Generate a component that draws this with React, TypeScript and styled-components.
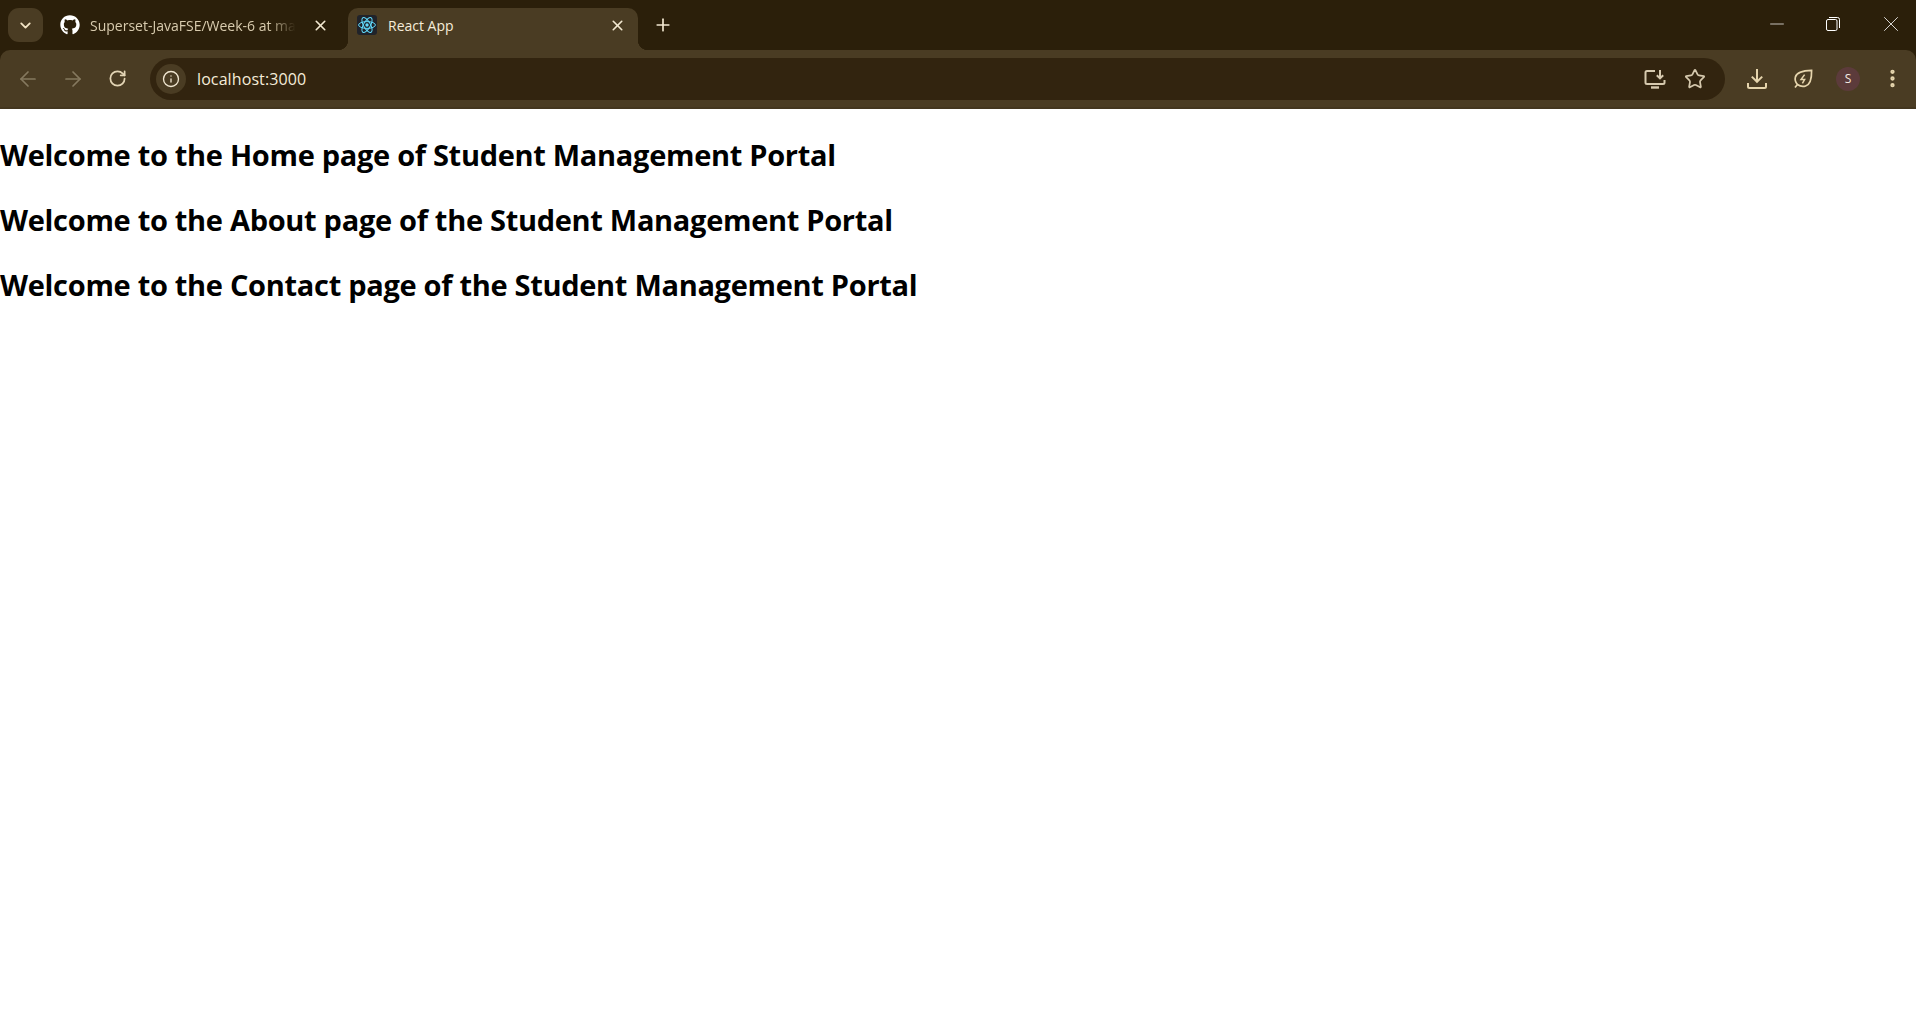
import React from 'react'
import styled, { createGlobalStyle } from 'styled-components'
import { FaGithub } from 'react-icons/fa'
import { ArrowLeft, ArrowRight, ChevronDown, EllipsisVertical, Info, Minus, Plus, RotateCw, Star, X } from 'lucide-react'

const GlobalStyle = createGlobalStyle`
  html, body {
    margin: 0;
    padding: 0;
    background: #ffffff;
  }
  body {
    font-family: "Open Sans", "Noto Sans", "Liberation Sans", sans-serif;
  }
`

const Browser = styled.header`
  background: #2b1f0a;
`

const TabStrip = styled.div`
  display: flex;
  align-items: flex-end;
  height: 50px;
  padding-left: 8px;
`

const TabSearch = styled.button`
  display: flex;
  align-items: center;
  justify-content: center;
  align-self: flex-start;
  width: 35px;
  height: 34px;
  margin-top: 8px;
  padding: 0;
  border: 0;
  border-radius: 11px;
  background: #4a3c23;
  color: #f3e4c4;
`

const Tab = styled.div<{ $active?: boolean }>`
  position: relative;
  display: flex;
  align-items: center;
  width: ${({ $active }) => ($active ? '290px' : '292px')};
  height: 42px;
  margin-left: ${({ $active }) => ($active ? '8px' : '5px')};
  padding: 0 ${({ $active }) => ($active ? '12px' : '11px')} 8px ${({ $active }) => ($active ? '9px' : '12px')};
  box-sizing: border-box;
  border-radius: 10px 10px 0 0;
  background: ${({ $active }) => ($active ? '#4a3c23' : 'transparent')};
  color: ${({ $active }) => ($active ? '#f5ecd9' : '#d8cbae')};
  font-size: 14px;
  ${({ $active }) =>
    $active &&
    `
    &::before, &::after {
      content: '';
      position: absolute;
      bottom: 0;
      width: 10px;
      height: 10px;
    }
    &::before {
      left: -10px;
      background: radial-gradient(circle at 0 0, transparent 10px, #4a3c23 10.5px);
    }
    &::after {
      right: -10px;
      background: radial-gradient(circle at 100% 0, transparent 10px, #4a3c23 10.5px);
    }
  `}
`

const TabIcon = styled.span<{ $gap: number }>`
  display: flex;
  flex: none;
  width: 20px;
  height: 20px;
  margin-right: ${({ $gap }) => $gap}px;
`

const FaviconTile = styled.svg`
  display: block;
  width: 20px;
  height: 20px;
`

const TabTitle = styled.span<{ $fade?: boolean }>`
  flex: 1;
  overflow: hidden;
  white-space: nowrap;
  ${({ $fade }) =>
    $fade &&
    `
    mask-image: linear-gradient(to right, #000 84%, transparent 97%);
  `}
`

const TabClose = styled.span`
  display: flex;
  flex: none;
  margin-left: 10px;
  color: #f3e9d2;
`

const NewTab = styled.span`
  display: flex;
  align-self: center;
  margin-left: 15px;
  color: #f3e9d2;
`

const WindowControls = styled.div`
  display: flex;
  align-self: flex-start;
  margin-left: auto;
  height: 50px;
`

const WindowButton = styled.span<{ $width: number }>`
  display: flex;
  align-items: center;
  justify-content: center;
  width: ${({ $width }) => $width}px;
  padding-bottom: 2px;
  color: #ffffff;
`

const Toolbar = styled.div`
  display: flex;
  align-items: center;
  height: 57px;
  padding: 0 2px 0 10px;
  border-bottom: 2px solid #43361f;
  border-radius: 10px 10px 0 0;
  background: #4a3c23;
`

const NavButton = styled.span<{ $dim?: boolean }>`
  display: flex;
  align-items: center;
  justify-content: center;
  flex: none;
  width: 36px;
  margin-right: 8.5px;
  color: ${({ $dim }) => ($dim ? '#85795f' : '#e3d5b5')};
`

const Omnibox = styled.div`
  display: flex;
  align-items: center;
  flex: 1;
  height: 42px;
  margin-left: 6.5px;
  padding: 0 10px 0 6px;
  border-radius: 21px;
  background: #32240f;
`

const SiteInfo = styled.span`
  display: flex;
  align-items: center;
  justify-content: center;
  flex: none;
  width: 30px;
  height: 30px;
  border-radius: 50%;
  background: #4a3c23;
  color: #f0e6d0;
`

const Address = styled.span`
  flex: 1;
  margin-left: 11px;
  color: #f5ecd9;
  font-size: 16px;
  letter-spacing: 0.1px;
`

const OmniAction = styled.span<{ $gap: number }>`
  display: flex;
  margin-right: ${({ $gap }) => $gap}px;
  color: #d6c9ae;
`

const ToolActions = styled.div`
  display: flex;
  align-items: center;
  margin-left: 9px;
`

const ToolAction = styled.span<{ $width: number }>`
  display: flex;
  align-items: center;
  justify-content: center;
  width: ${({ $width }) => $width}px;
  color: #e6d5ad;
`

const Avatar = styled.span`
  display: flex;
  align-items: center;
  justify-content: center;
  width: 24px;
  height: 24px;
  border-radius: 50%;
  background: #5c3b3b;
  color: #f4e8e0;
  font-size: 12px;
`

const Content = styled.main`
  padding-top: 13px;
  color: #000000;
`

const Heading = styled.h1`
  margin: 0;
  padding: 0;
  height: 65px;
  font-size: 29px;
  line-height: 65px;
  font-weight: 700;
  white-space: nowrap;
  letter-spacing: -0.3px;
`

function ReactFavicon() {
  return (
    <FaviconTile viewBox="0 0 20 20">
      <rect width="20" height="20" rx="3" fill="#20232a" />
      <g fill="none" stroke="#61dafb" strokeWidth="1">
        <ellipse cx="10" cy="10" rx="8.4" ry="3.4" />
        <ellipse cx="10" cy="10" rx="8.4" ry="3.4" transform="rotate(60 10 10)" />
        <ellipse cx="10" cy="10" rx="8.4" ry="3.4" transform="rotate(120 10 10)" />
      </g>
      <circle cx="10" cy="10" r="1.7" fill="#61dafb" />
    </FaviconTile>
  )
}

function InstallIcon() {
  return (
    <svg width="22" height="20" viewBox="0 0 22 20" fill="none" stroke="currentColor" strokeWidth="2">
      <path d="M11 2H3a1.5 1.5 0 0 0-1.5 1.5v10A1.5 1.5 0 0 0 3 15h16a1.5 1.5 0 0 0 1.5-1.5V11" />
      <path d="M7 18.5h8" strokeWidth="2.4" />
      <path d="M16 1v8M12.8 6.2 16 9.4l3.2-3.2" />
    </svg>
  )
}

function DownloadIcon() {
  return (
    <svg width="20" height="20" viewBox="0 0 20 20" fill="none" stroke="currentColor" strokeWidth="2">
      <path d="M10 0v12.5M4.8 7.6l5.2 5.2 5.2-5.2" />
      <path d="M1 14v3.5A1.5 1.5 0 0 0 2.5 19h15a1.5 1.5 0 0 0 1.5-1.5V14" />
    </svg>
  )
}

function LeafBoltIcon() {
  return (
    <svg width="20" height="20" viewBox="0 0 20 20" fill="none" stroke="currentColor" strokeWidth="1.7">
      <path d="M2 18.5l2.4-3C2.8 13.6 1.6 11 2.4 8 3.6 3.6 8.5 1.6 18.6 1.4c.2 9-1.6 14-6 15.6-2.9 1-5.8.2-8.2-1.5" />
      <path d="M11.6 5.6 8 10.6h3.6L9.4 14.4" strokeWidth="1.5" />
    </svg>
  )
}

function RestoreIcon() {
  return (
    <svg width="14" height="14" viewBox="0 0 14 14" fill="none" stroke="currentColor" strokeWidth="1">
      <rect x="0.5" y="2.5" width="10.5" height="11" rx="1.5" />
      <path d="M3 .5h8.5a2 2 0 0 1 2 2V11" />
    </svg>
  )
}

export default function App() {
  return (
    <>
      <GlobalStyle />
      <Browser>
        <TabStrip>
          <TabSearch>
            <ChevronDown size={17} strokeWidth={2.6} />
          </TabSearch>
          <Tab>
            <TabIcon $gap={10}>
              <FaGithub size={20} color="#ffffff" />
            </TabIcon>
            <TabTitle $fade>Superset-JavaFSE/Week-6 at main</TabTitle>
            <TabClose>
              <X size={17} strokeWidth={2.3} />
            </TabClose>
          </Tab>
          <Tab $active>
            <TabIcon $gap={11}>
              <ReactFavicon />
            </TabIcon>
            <TabTitle>React App</TabTitle>
            <TabClose>
              <X size={17} strokeWidth={2.3} />
            </TabClose>
          </Tab>
          <NewTab>
            <Plus size={20} strokeWidth={2} />
          </NewTab>
          <WindowControls>
            <WindowButton $width={46}>
              <Minus size={22} strokeWidth={0.8} />
            </WindowButton>
            <WindowButton $width={66}>
              <RestoreIcon />
            </WindowButton>
            <WindowButton $width={50}>
              <X size={26} strokeWidth={0.75} />
            </WindowButton>
          </WindowControls>
        </TabStrip>
        <Toolbar>
          <NavButton $dim>
            <ArrowLeft size={24} strokeWidth={1.7} />
          </NavButton>
          <NavButton $dim>
            <ArrowRight size={24} strokeWidth={1.7} />
          </NavButton>
          <NavButton>
            <RotateCw size={19} strokeWidth={2.2} />
          </NavButton>
          <Omnibox>
            <SiteInfo>
              <Info size={18} strokeWidth={1.8} />
            </SiteInfo>
            <Address>localhost:3000</Address>
            <OmniAction $gap={18}>
              <InstallIcon />
            </OmniAction>
            <OmniAction $gap={9}>
              <Star size={22} strokeWidth={1.9} />
            </OmniAction>
          </Omnibox>
          <ToolActions>
            <ToolAction $width={46}>
              <DownloadIcon />
            </ToolAction>
            <ToolAction $width={46}>
              <LeafBoltIcon />
            </ToolAction>
            <ToolAction $width={44}>
              <Avatar>S</Avatar>
            </ToolAction>
            <ToolAction $width={44}>
              <EllipsisVertical size={23} strokeWidth={2.5} />
            </ToolAction>
          </ToolActions>
        </Toolbar>
      </Browser>
      <Content>
        <Heading>Welcome to the Home page of Student Management Portal</Heading>
        <Heading>Welcome to the About page of the Student Management Portal</Heading>
        <Heading>Welcome to the Contact page of the Student Management Portal</Heading>
      </Content>
    </>
  )
}
